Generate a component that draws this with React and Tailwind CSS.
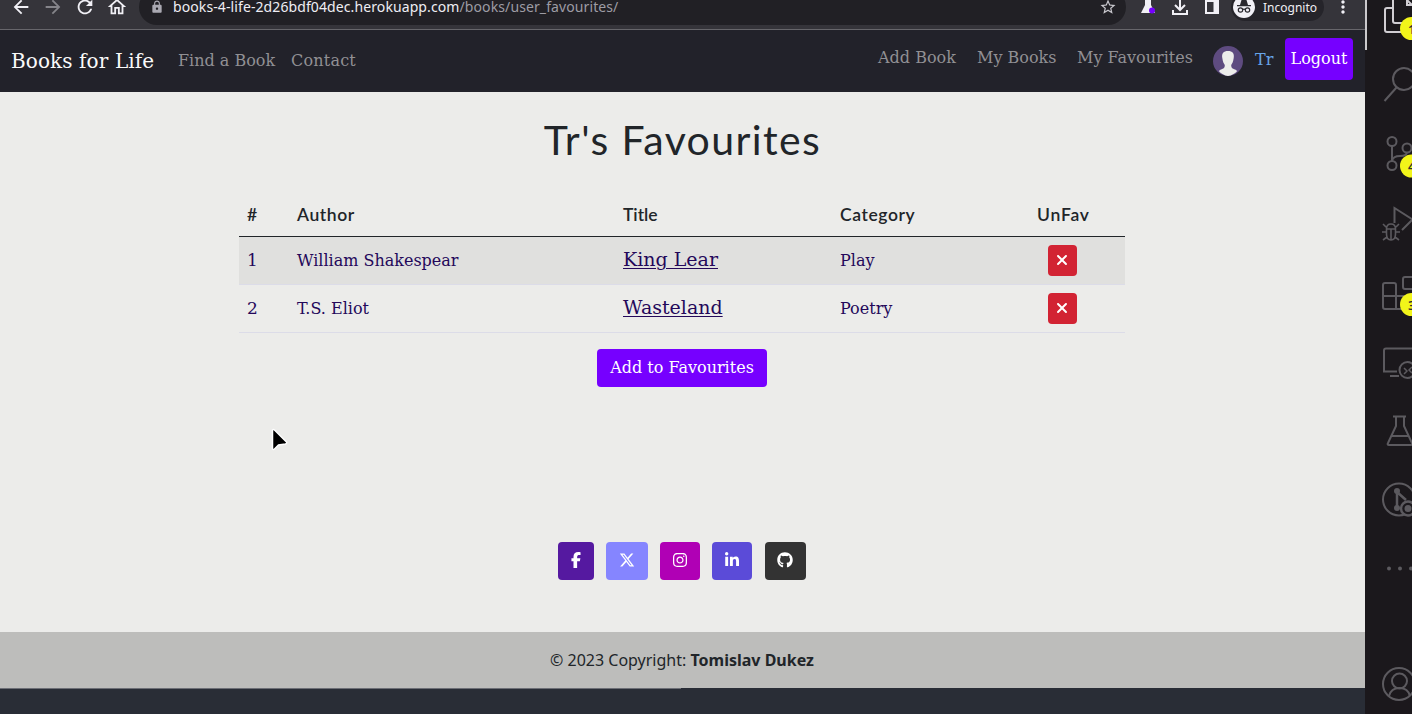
import React from "react";
import { FaFacebookF, FaInstagram, FaLinkedinIn, FaGithub, FaXmark, FaXTwitter } from "react-icons/fa6";
import { MdArrowBack, MdArrowForward, MdRefresh, MdOutlineHome, MdLock, MdStarBorder, MdMoreVert } from "react-icons/md";

function BrowserBar() {
  return (
    <div className="h-[30px] shrink-0 overflow-hidden border-b border-[#67666b] bg-[#35343a]">
      <div className="-mt-[11px] flex h-9 items-center pl-[10px] text-[#f1f0f6]">
        <MdArrowBack className="mr-[10px] size-[22px] shrink-0" />
        <MdArrowForward className="mr-[10px] size-[22px] shrink-0 text-[#85848a]" />
        <MdRefresh className="mr-[10px] size-[22px] shrink-0" />
        <MdOutlineHome className="size-[22px] shrink-0" />
        <div className="ml-[11px] flex h-9 w-[987px] shrink-0 items-center rounded-full bg-[#212025] pr-[9px] pl-[11px]">
          <MdLock className="size-[14px] text-[#aaa9b2]" />
          <span className="ml-[9px] font-['Noto_Sans'] text-[14px] leading-[14px] tracking-[0.1px] whitespace-nowrap text-[#efeef4]">
            books-4-life-2d26bdf04dec.herokuapp.com<span className="text-[#9d9ca4]">/books/user_favourites/</span>
          </span>
          <MdStarBorder className="ml-auto size-[18px] text-[#c9c8ce]" />
        </div>
        <svg className="ml-[14px] h-6 w-[17px] shrink-0" viewBox="0 0 17 24">
          <path d="M5 1h6v9l4 8H1l4-8z" fill="#f1f0f6" />
          <circle cx="12" cy="15.500" r="3" fill="#7600ff" />
        </svg>
        <svg className="ml-[13px] size-[20px] shrink-0" viewBox="0 0 20 20" fill="none" stroke="currentColor" strokeWidth="2">
          <path d="M10 1v12M5 8l5 5 5-5M3 13v4h14v-4" />
        </svg>
        <svg className="ml-[13px] size-[18px] shrink-0" viewBox="0 0 18 18" fill="none" stroke="currentColor" strokeWidth="2">
          <path d="M3 3h12v12H3z" />
          <path d="M12.500 3v12" strokeWidth="4" />
        </svg>
        <div className="ml-[10px] flex h-7 w-[93px] shrink-0 items-center rounded-full bg-[#25242a] pl-[2px]">
          <svg className="size-[22px]" viewBox="0 0 22 22">
            <circle cx="11" cy="11" r="11" fill="#f1f0f6" />
            <path d="M7 9l1.500-5h5L15 9zM4 9h14v1.300H4z" fill="#29282e" />
            <g fill="none" stroke="#29282e" strokeWidth="1.200">
              <circle cx="7.500" cy="14" r="2.200" />
              <circle cx="14.500" cy="14" r="2.200" />
              <path d="M9.700 13.500q1.300-.8 2.600 0" />
            </g>
          </svg>
          <span className="mt-[2px] ml-[8px] font-['Noto_Sans'] text-[12px] leading-[12px] text-[#efeef4]">Incognito</span>
        </div>
        <MdMoreVert className="ml-[9px] size-5 shrink-0" />
      </div>
    </div>
  );
}

function NavBar() {
  return (
    <nav className="flex h-[62px] shrink-0 items-start bg-[#22222a] font-['DejaVu_Serif',serif] text-[16px] leading-6 whitespace-nowrap text-[#919094]">
      <a className="mt-[19px] ml-[11px] w-[167px] text-[20px] tracking-[0.1px] text-[#fafafa]">Books for Life</a>
      <a className="mt-[19px] w-[113px]">Find a Book</a>
      <a className="mt-[19px] tracking-[0.2px]">Contact</a>
      <div className="ml-auto flex items-start pr-3">
        <a className="mt-[16px] w-[99px]">Add Book</a>
        <a className="mt-[16px] w-[100px]">My Books</a>
        <a className="mt-[16px] w-[136px]">My Favourites</a>
        <svg className="mt-4 size-[30px]" viewBox="0 0 30 30">
          <circle cx="15" cy="15" r="15" fill="#5e4b80" />
          <path d="M15 5c4.500 0 6.500 2.500 5.700 7-.5 4-1.500 5.500-2.500 7 0 3 1 3.500 4 4.500l2 1.500A15 15 0 0 1 15 30a15 15 0 0 1-9.200-5l2-1.500c3-1 4-1.500 4-4.500-1-1.500-2-3-2.500-7C8.500 7.500 10.500 5 15 5z" fill="#ededeb" />
        </svg>
        <span className="mt-[18px] ml-3 w-[30px] text-[#68a5e8]">Tr</span>
        <button className="mt-2 flex h-[42px] w-[68px] items-center justify-center rounded-[4px] bg-[#7600ff] pb-[1px] text-white">Logout</button>
      </div>
    </nav>
  );
}

const books = [
  { id: 1, author: "William Shakespear", title: "King Lear", category: "Play" },
  { id: 2, author: "T.S. Eliot", title: "Wasteland", category: "Poetry" },
];

function FavouritesTable() {
  return (
    <table className="mt-[30px] w-[886px] table-fixed border-collapse self-start whitespace-nowrap">
      <colgroup>
        <col className="w-[50px]" />
        <col className="w-[326px]" />
        <col className="w-[217px]" />
        <col className="w-[189px]" />
        <col className="w-[104px]" />
      </colgroup>
      <thead>
        <tr className="h-[42px] border-b border-[#212529] text-left font-['Lato'] text-[17.5px] leading-6 tracking-[0.6px] text-[#212529]">
          <th className="px-2 font-semibold">#</th>
          <th className="px-2 font-semibold">Author</th>
          <th className="px-2 font-semibold tracking-[0px]">Title</th>
          <th className="px-2 font-semibold">Category</th>
          <th className="px-2 font-semibold">
            <span className="ml-[8px] tracking-[0.8px]">UnFav</span>
          </th>
        </tr>
      </thead>
      <tbody className="font-['DejaVu_Serif',serif] text-[16px] text-[#24085a]">
        {books.map((book) => (
          <tr key={book.id} className="h-12 border-b border-[#dcdce8] odd:bg-[#e0e0de]">
            <td className="px-2 pt-[1px] text-[17px]">{book.id}</td>
            <td className="px-2 pt-[1px]">{book.author}</td>
            <td className="px-2 pb-[2px] text-[19px] underline decoration-1 underline-offset-2">{book.title}</td>
            <td className="px-2 pt-[1px]">{book.category}</td>
            <td className="pl-[27px]">
              <button className="flex h-[31px] w-[29px] items-center justify-center rounded-[4px] bg-[#d22333] pr-px text-white">
                <FaXmark className="size-[16px]" />
              </button>
            </td>
          </tr>
        ))}
      </tbody>
    </table>
  );
}

function SocialLinks() {
  return (
    <div className="mt-[155px] flex h-[38px] text-[16px] text-white [&>a]:flex [&>a]:items-center [&>a]:justify-center [&>a]:rounded-[4px] [&>a]:pb-[2px]">
      <a className="w-9 bg-[#5519a0]"><FaFacebookF /></a>
      <a className="ml-3 w-[42px] bg-[#8585ff]"><FaXTwitter /></a>
      <a className="ml-3 w-10 bg-[#b000b5]"><FaInstagram /></a>
      <a className="ml-3 w-10 bg-[#5b4bd8]"><FaLinkedinIn /></a>
      <a className="ml-[13px] w-[41px] bg-[#333333] pr-px"><FaGithub /></a>
    </div>
  );
}

function Badge({ y, label }) {
  return (
    <g>
      <circle cx="1411.500" cy={y} r="11.500" fill="#f2f51a" />
      <text x="1408" y={y + 5} fontFamily="Noto Sans" fontSize="13" fontWeight="600" fill="#32302a">{label}</text>
    </g>
  );
}

function SideIcon({ top, children, className = "text-[#5c5a5f]" }) {
  return (
    <svg className={`h-[69px] w-[47px] shrink-0 ${className}`} viewBox={`1365 ${top} 47 69`} fill="none" stroke="currentColor" strokeWidth="2">
      {children}
    </svg>
  );
}

function ActivityBar() {
  return (
    <aside className="flex h-full w-[47px] shrink-0 flex-col overflow-hidden bg-[#1b181c]">
      <div className="-mt-[19px] flex flex-col">
        <SideIcon top={-19} className="text-[#d1ced3]">
          <path d="M1366 0v51" stroke="#cbc9cc" />
          <path d="M1394 8h-7q-2 0-2 2v20q0 2 2 2h18M1393-1v22q0 2 2 2h17M1407-1v6h6M1407 0l5 5" />
          <g stroke="none"><Badge y={28.5} label="1" /></g>
        </SideIcon>
        <SideIcon top={50}>
          <circle cx="1404" cy="79" r="11" />
          <path d="M1396.500 87.500l-12 13.500" />
        </SideIcon>
        <SideIcon top={119}>
          <circle cx="1392" cy="141.500" r="4.500" />
          <circle cx="1392" cy="165.500" r="4.500" />
          <circle cx="1407" cy="148" r="4.500" />
          <path d="M1392 146v15M1392 161q1-5 8-5 7 0 7-4" />
          <g stroke="none"><Badge y={166} label="4" /></g>
        </SideIcon>
        <SideIcon top={188}>
          <path d="M1394.500 223v-15l18 11.500-10.500 10.500" />
          <path d="M1386.500 229q0-5 4.500-5t4.500 5v5q0 6-4.500 6t-4.500-6zM1386.500 229h9M1391 229v11M1386 227l-3-3M1396 227l3-3M1386 232h-4M1396 232h4M1387 237l-4 3M1395 237l4 3" strokeWidth="1.600" />
        </SideIcon>
        <SideIcon top={257}>
          <path d="M1396 309v-24q0-2-2-2h-9q-2 0-2 2v22q0 2 2 2h25M1383 296h25q2 0 2 2v11M1412 277h-7q-2 0-2 2v8q0 2 2 2h7" />
          <g stroke="none"><Badge y={304.5} label="3" /></g>
        </SideIcon>
        <SideIcon top={326}>
          <path d="M1412 348.500h-26q-2 0-2 2v21h13M1390 376h9" />
          <circle cx="1407.500" cy="370" r="8" />
          <path d="M1404 368l3 3-3 3M1412 367l-3 3 3 3" strokeWidth="1.500" />
        </SideIcon>
        <SideIcon top={395}>
          <path d="M1393 416.500h13M1396 417v9l-8 17q-1 2 1 2h22q2 0 1-2l-8-17v-9M1392 436h16" />
        </SideIcon>
        <SideIcon top={464}>
          <circle cx="1399" cy="499.500" r="16" />
          <path d="M1397 492v17M1397 492l9 8" strokeWidth="2.500" />
          <circle cx="1397" cy="491" r="3" fill="currentColor" stroke="none" />
          <circle cx="1397" cy="508" r="3" fill="currentColor" stroke="none" />
          <circle cx="1408" cy="508.500" r="7" fill="#1b181c" strokeWidth="2.500" />
          <circle cx="1408" cy="508.500" r="3.500" fill="currentColor" stroke="none" />
        </SideIcon>
        <SideIcon top={533}>
          <g fill="currentColor" stroke="none">
            <circle cx="1389" cy="568.500" r="2" />
            <circle cx="1400" cy="568.500" r="2" />
            <circle cx="1411" cy="568.500" r="2" />
          </g>
        </SideIcon>
      </div>
      <div className="mt-[46px] flex">
        <SideIcon top={648}>
          <circle cx="1399" cy="684" r="16" />
          <circle cx="1399.500" cy="681" r="7.500" />
          <path d="M1389 696q2-8 10.500-8t10.500 8" />
        </SideIcon>
      </div>
    </aside>
  );
}

export default function App() {
  return (
    <div className="relative flex h-[714px] w-[1412px] overflow-hidden bg-[#ececea]">
      <div className="flex w-[1365px] shrink-0 flex-col">
        <BrowserBar />
        <NavBar />
        <main className="flex h-[540px] shrink-0 flex-col items-center bg-[#ececea] pr-px">
          <h1 className="mt-6 h-12 pl-px font-['Lato'] text-[41px] leading-[48px] tracking-[1.4px] whitespace-nowrap text-[#212529]">Tr's Favourites</h1>
          <div className="flex w-full pl-[239px]">
            <FavouritesTable />
          </div>
          <button className="mt-4 flex h-[38px] w-[170px] items-center justify-center rounded-[4px] bg-[#7600ff] font-['DejaVu_Serif',serif] text-[16px] whitespace-nowrap text-white">
            Add to Favourites
          </button>
          <SocialLinks />
        </main>
        <footer className="flex h-14 shrink-0 items-center justify-center bg-[#bdbdbb] pr-px font-['Noto_Sans'] text-[16px] text-[#212529]">
          <p>© 2023 Copyright: <strong>Tomislav Dukez</strong></p>
        </footer>
        <div className="h-[26px] bg-[#292d36]">
          <div className="h-px w-[681px] bg-[#6c6e75]" />
        </div>
      </div>
      <ActivityBar />
      <svg className="absolute top-[427px] left-[269px] h-[26px] w-[20px]" viewBox="0 0 20 26">
        <path d="M3.500 3v19q1 1 2 0l4-4 7-1q2-1 1-2L5.500 3q-1-1-2 0z" fill="#000" stroke="#fff" strokeWidth="1.500" />
      </svg>
    </div>
  );
}
